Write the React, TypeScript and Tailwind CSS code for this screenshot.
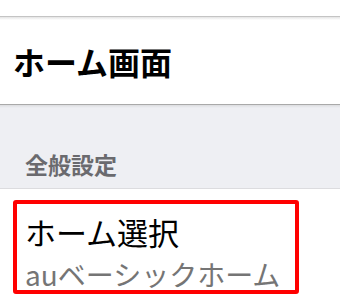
export default function App() {
  const font = { fontFamily: '"Noto Sans CJK JP", "Noto Sans", sans-serif' };
  return (
    <div className="relative w-[340px] h-[300px] overflow-hidden bg-white" style={font}>
      {/* top strip */}
      <div className="h-[16px] bg-white" />
      <div className="h-[1px] bg-[#c4c4c4]" />
      <div className="h-[87px] bg-white flex items-center px-[13px] relative">
        <div className="absolute top-0 left-0 right-0 h-[3px] bg-gradient-to-b from-[#e4e4e4] to-white" />
        <span className="text-[32px] font-bold leading-none text-black">ホーム画面</span>
      </div>
      <div className="h-[1px] bg-[#a9a9a9]" />

      {/* section header */}
      <div className="h-[83px] bg-[#eeeff3] flex items-end px-[25px] pb-[12px] relative">
        <div className="absolute top-0 left-0 right-0 h-[3px] bg-gradient-to-b from-[#dcdde0] to-[#eeeff3]" />
        <span className="text-[23px] font-bold leading-none text-[#6a6a6e]">全般設定</span>
      </div>
      <div className="h-[1px] bg-[#dcdcdf]" />

      {/* list item */}
      <div className="bg-white px-[25px] pt-[26px]">
        <div className="text-[31px] leading-[34px] text-black">ホーム選択</div>
        <div className="mt-[10px] text-[28px] leading-[30px] text-[#757575]">auベーシックホーム</div>
      </div>

      {/* highlight overlay */}
      <div className="absolute left-[13px] top-[200px] w-[286px] h-[94px] border-[4px] border-[#ff0000] rounded-[3px]" />
    </div>
  );
}
